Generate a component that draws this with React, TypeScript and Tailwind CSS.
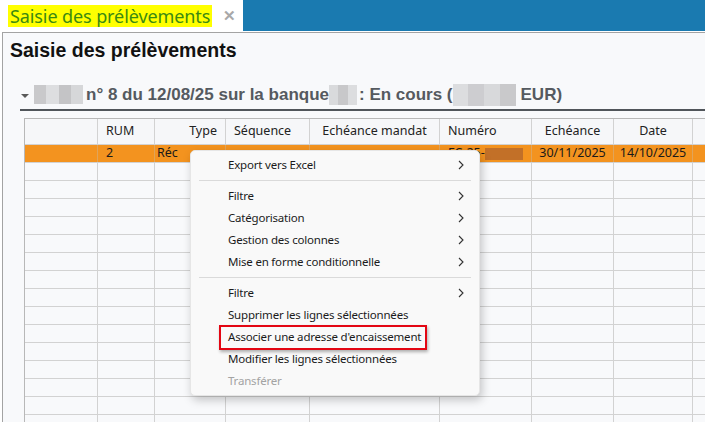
import React from "react";

const cols = [73, 57, 71, 84, 130, 92, 82, 79, 40];

function Chevron() {
  return (
    <svg width="6" height="10" viewBox="0 0 6 10" className="shrink-0">
      <path d="M1 1 L5 5 L1 9" fill="none" stroke="#333" strokeWidth="1.1" />
    </svg>
  );
}

function Blur({ w, h, tiles }: { w: number; h: number; tiles: string[] }) {
  return (
    <div className="flex shrink-0" style={{ width: w, height: h }}>
      {tiles.map((c, i) => (
        <div key={i} className="flex-1 h-full" style={{ background: c }} />
      ))}
    </div>
  );
}

function Item({ label, arrow, disabled }: { label: string; arrow?: boolean; disabled?: boolean }) {
  return (
    <div className="h-[22px] flex items-center pl-[37px] pr-[15px]">
      <span
        className={"flex-1 text-[11.5px] tracking-[-0.2px] " + (disabled ? "text-[#a3a3a3]" : "text-[#1b1b1b]")}
      >
        {label}
      </span>
      {arrow && <Chevron />}
    </div>
  );
}

function Sep() {
  return (
    <div className="h-[9px] flex items-center px-[8px]">
      <div className="h-px w-full bg-[#dadada]" />
    </div>
  );
}

export default function App() {
  const rows = Array.from({ length: 15 });
  return (
    <div
      className="relative w-[705px] h-[422px] overflow-hidden bg-white flex flex-col"
      style={{ fontFamily: '"Noto Sans", "Open Sans", sans-serif' }}
    >
      {/* Tab bar */}
      <div className="flex h-[31px] shrink-0">
        <div className="w-[243px] flex items-center pl-[8px] gap-[11px]">
          <span className="bg-[#ffff00] text-[#3b8a12] text-[18px] leading-[22px] px-[2px] tracking-[-0.1px]">
            Saisie des prélèvements
          </span>
          <span className="text-[#a8a8a8] text-[15px] font-bold leading-none">✕</span>
        </div>
        <div className="flex-1 bg-[#1a7ab0]" />
      </div>
      <div className="h-px shrink-0" />

      {/* Panel */}
      <div className="ml-[2px] flex-1 border-l border-t border-[#a3a3a3] bg-[#f8f9fb] flex flex-col min-h-0 overflow-hidden">
        <div
          className="shrink-0 pl-[7px] pt-[4px] h-[47px] text-[19.5px] leading-[26px] font-bold text-[#111]"
          style={{ fontFamily: '"Liberation Sans", Arial, sans-serif' }}
        >
          Saisie des prélèvements
        </div>
        {/* Group header */}
        <div
          className="shrink-0 ml-[17px] h-[31px] flex items-center border-b-2 border-[#50555a] text-[#555a60] text-[17px] font-bold"
          style={{ fontFamily: '"Liberation Sans", Arial, sans-serif' }}
        >
          <svg width="8" height="5" viewBox="0 0 8 5" className="ml-[1px] mr-[5px] mt-[4px]">
            <path d="M0 0 L8 0 L4 4 Z" fill="#5a5a5a" />
          </svg>
          <Blur w={49} h={19} tiles={["#c9c9cb", "#dddee0", "#c4c4c6", "#d6d7d9"]} />
          <span className="ml-[3px]">n° 8 du 12/08/25 sur la banque</span>
          <Blur w={28} h={20} tiles={["#d9dadc", "#c8c8ca", "#dcdddf"]} />
          <span className="ml-[2px]">: En cours (</span>
          <Blur w={63} h={22} tiles={["#dcdddf", "#cdcdd0", "#d8d9db", "#c9c9cb"]} />
          <span className="ml-[5px]">EUR)</span>
        </div>

        {/* Table */}
        <div className="shrink-0 ml-[21px] mt-[7px] border-l border-t border-[#b8b8b8] flex flex-col text-[12.5px] text-[#222]">
          {/* Header */}
          <div className="flex h-[26px] shrink-0 border-b border-[#d2d2d2] bg-[#f6f7f9]">
            {[
              { t: "", a: "" },
              { t: "RUM", a: "justify-start pl-[8px]" },
              { t: "Type", a: "justify-end pr-[8px]" },
              { t: "Séquence", a: "justify-start pl-[8px]" },
              { t: "Echéance mandat", a: "justify-center" },
              { t: "Numéro", a: "justify-start pl-[8px]" },
              { t: "Echéance", a: "justify-center" },
              { t: "Date", a: "justify-center" },
              { t: "", a: "" },
            ].map((c, i) => (
              <div
                key={i}
                className={"flex items-center border-r border-[#d2d2d2] shrink-0 " + c.a}
                style={{ width: cols[i] }}
              >
                {c.t}
              </div>
            ))}
          </div>
          {/* Orange row */}
          <div className="flex h-[18px] shrink-0 border-b border-[#d2d2d2] bg-[#f3931f] text-[#1a1a1a]">
            <div className="border-r border-[#e0a45a] shrink-0" style={{ width: cols[0] }} />
            <div className="border-r border-[#e0a45a] shrink-0 flex items-center pl-[8px]" style={{ width: cols[1] }}>2</div>
            <div className="border-r border-[#e0a45a] shrink-0 flex items-center pl-[2px]" style={{ width: cols[2] }}>Réc</div>
            <div className="border-r border-[#e0a45a] shrink-0" style={{ width: cols[3] }} />
            <div className="border-r border-[#e0a45a] shrink-0" style={{ width: cols[4] }} />
            <div className="border-r border-[#e0a45a] shrink-0 flex items-center pl-[8px]" style={{ width: cols[5] }}>
              FC-25-
              <div className="w-[38px] h-[12px] bg-[#b5682a] opacity-80" />
            </div>
            <div className="border-r border-[#e0a45a] shrink-0 flex items-center justify-center" style={{ width: cols[6] }}>30/11/2025</div>
            <div className="border-r border-[#e0a45a] shrink-0 flex items-center justify-center" style={{ width: cols[7] }}>14/10/2025</div>
            <div className="shrink-0" style={{ width: cols[8] }} />
          </div>
          {rows.map((_, r) => (
            <div key={r} className="flex h-[18px] shrink-0 border-b border-[#d2d2d2]">
              {cols.map((w, i) => (
                <div key={i} className="border-r border-[#d2d2d2] shrink-0" style={{ width: w }} />
              ))}
            </div>
          ))}
        </div>
      </div>

      {/* Context menu */}
      <div className="absolute left-[190px] top-[150px] w-[290px] py-[3px] bg-[#f9f9f9] border border-[#e6e6e6] rounded-[5px] shadow-[2px_4px_10px_rgba(0,0,0,0.22)]">
        <Item label="Export vers Excel" arrow />
        <Sep />
        <Item label="Filtre" arrow />
        <Item label="Catégorisation" arrow />
        <Item label="Gestion des colonnes" arrow />
        <Item label="Mise en forme conditionnelle" arrow />
        <Sep />
        <Item label="Filtre" arrow />
        <Item label="Supprimer les lignes sélectionnées" />
        <Item label="Associer une adresse d'encaissement" />
        <Item label="Modifier les lignes sélectionnées" />
        <Item label="Transférer" disabled />
        <div className="absolute left-[28px] top-[174px] w-[208px] h-[25px] border-2 border-[#e30613] shadow-[1px_2px_3px_rgba(0,0,0,0.3)]" />
      </div>
    </div>
  );
}
